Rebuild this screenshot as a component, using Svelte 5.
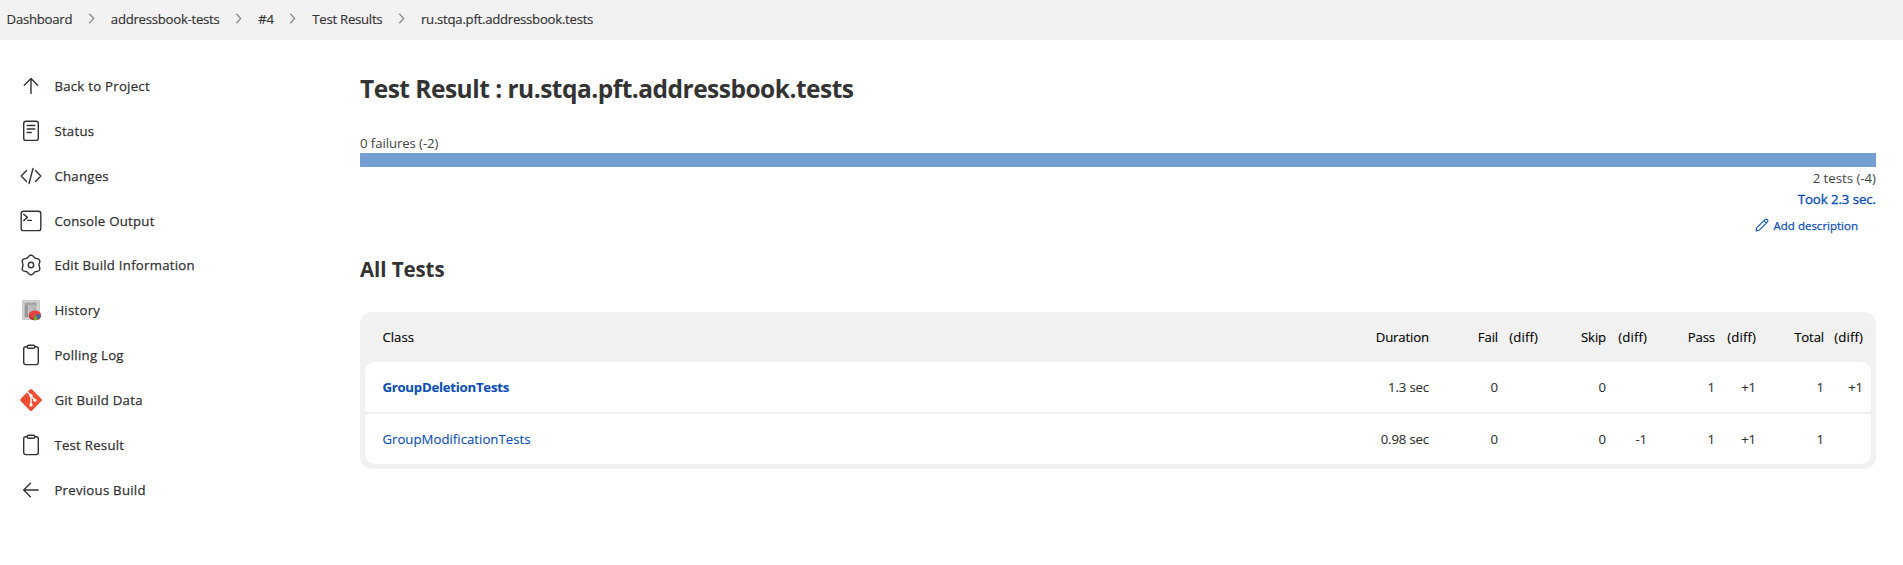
<script>
  const crumbs = ['Dashboard', 'addressbook-tests', '#4', 'Test Results', 'ru.stqa.pft.addressbook.tests'];
  const tasks = [
    ['up', 'Back to Project'],
    ['doc', 'Status'],
    ['code', 'Changes'],
    ['terminal', 'Console Output'],
    ['gear', 'Edit Build Information'],
    ['history', 'History'],
    ['clipboard', 'Polling Log'],
    ['git', 'Git Build Data'],
    ['clipboard', 'Test Result'],
    ['left', 'Previous Build']
  ];
  const head = ['Class', 'Duration', 'Fail', '(diff)', 'Skip', '(diff)', 'Pass', '(diff)', 'Total', '(diff)'];
  const rows = [
    { name: 'GroupDeletionTests', bold: true, cells: ['1.3 sec', '0', '', '0', '', '1', '+1', '1', '+1'] },
    { name: 'GroupModificationTests', bold: false, cells: ['0.98 sec', '0', '', '0', '-1', '1', '+1', '1', ''] }
  ];

  // Six-lobed outline of the settings cog
  const cog = Array.from({ length: 90 }, (_, i) => {
    const a = (i / 90) * Math.PI * 2;
    const r = 8.9 + 0.95 * Math.cos(6 * a);
    return `${(12 + r * Math.sin(a)).toFixed(2)},${(12 - r * Math.cos(a)).toFixed(2)}`;
  }).join(' ');
</script>

<nav class="crumbs">
  {#each crumbs as c, i}
    {#if i > 0}
      <svg class="chev" viewBox="0 0 6 10"><path d="M1 .7 5 5 1 9.3" /></svg>
    {/if}
    <a href="#top" class="crumb">{c}</a>
  {/each}
</nav>

<div class="page">
  <aside>
    {#each tasks as [icon, label]}
      <a href="#top" class="task">
        <svg class="icon" viewBox="0 0 24 24">
          {#if icon === 'up'}
            <path d="M5.3 11.3 12 4.6l6.7 6.7M12 5v14.4" />
          {:else if icon === 'left'}
            <path d="M11.4 5.3 4.7 12l6.7 6.7M5 12h14.2" />
          {:else if icon === 'doc'}
            <rect x="4.7" y="2.2" width="14.6" height="19.2" rx="2.2" />
            <path d="M8.2 6.5h7.6M8.2 10h7.6M8.2 13.5h4" />
          {:else if icon === 'code'}
            <path d="M7.5 6.6 2.2 12l5.3 5.4M16.5 6.6l5.3 5.4-5.3 5.4M14 4.5 10 19.5" />
          {:else if icon === 'terminal'}
            <rect x="2.2" y="2.2" width="19.6" height="19.4" rx="2.2" />
            <path d="M4.7 5.2 8.4 8.4l-3.7 3.2M8.8 11.4h3.6" />
          {:else if icon === 'gear'}
            <circle cx="12" cy="12" r="2.7" />
            <polygon points={cog} />
          {:else if icon === 'clipboard'}
            <path d="M8.2 3.7H6.8a2.1 2.1 0 0 0-2.1 2.1v13.7a2.1 2.1 0 0 0 2.1 2.1h10.4a2.1 2.1 0 0 0 2.1-2.1V5.8a2.1 2.1 0 0 0-2.1-2.1h-1.4" />
            <rect x="8.2" y="2.2" width="7.6" height="3" rx="1.3" />
          {:else if icon === 'git'}
            <g stroke="none">
              <path fill="#f14e32" d="M13.1 1.5a1.6 1.6 0 0 0-2.2 0L1.5 10.9a1.6 1.6 0 0 0 0 2.2l9.4 9.4a1.6 1.6 0 0 0 2.2 0l9.4-9.4a1.6 1.6 0 0 0 0-2.2z" />
              <circle cx="12" cy="7.7" r="1.65" fill="#fff" />
              <circle cx="12" cy="16.9" r="1.65" fill="#fff" />
              <circle cx="15.9" cy="12.2" r="1.65" fill="#fff" />
            </g>
            <path stroke="#fff" d="M8.7 4.3 12 7.7v9.2M12 7.9l3.9 4.2" />
          {:else}
            <g stroke="none">
              <rect x="3" y="2" width="18" height="20" rx="1.2" fill="#c9c9c9" />
              <rect x="4.5" y="3.5" width="15" height="17" fill="#d9d9d8" />
              <path fill="#a4a5a5" d="M5.5 4.5h12.5v2.5H5.5z" />
              <path fill="#969898" d="M5.5 7h3.5v12.5H5.5z" />
              <path fill="#b9baba" d="M9.5 7h8.5v12H9.5z" />
              <ellipse cx="15.9" cy="17.8" rx="6.2" ry="4.5" fill="#b52022" />
              <ellipse cx="15.9" cy="16.6" rx="6.1" ry="4.1" fill="#e04442" />
              <path fill="#3f68b5" d="M16.4 16.7h5.6c0 2-1.2 3.5-3 4.3z" />
              <path fill="#62b32e" d="M16 16.7l2.8 4.6c-1.5.9-3.2 1-4.3.7z" />
            </g>
          {/if}
        </svg>
        <span>{label}</span>
      </a>
    {/each}
  </aside>

  <main>
    <h1>Test Result : ru.stqa.pft.addressbook.tests</h1>
    <div class="failures">0 failures (-2)</div>
    <div class="bar"></div>
    <div class="total">2 tests (-4)</div>
    <a class="took" href="#top">Took 2.3 sec.</a>
    <a class="describe" href="#top">
      <svg viewBox="0 0 15 15"><path d="M1.1 13.9 2 10.3 10.6 1.7a1.7 1.7 0 0 1 2.6 2.6L4.6 12.9zM9.4 2.9l2.7 2.7" /></svg>
      <span>Add description</span>
    </a>
    <h2>All Tests</h2>
    <div class="table">
      <div class="row head">
        {#each head as h}<span class:diff={h === '(diff)'}>{h}</span>{/each}
      </div>
      {#each rows as r}
        <div class="row">
          <a href="#top" class:bold={r.bold}>{r.name}</a>
          {#each r.cells as c}<span>{c}</span>{/each}
        </div>
      {/each}
    </div>
  </main>
</div>

<style>
  :global(body) {
    margin: 0;
    background: #fff;
    color: #333;
    font-family: 'Open Sans', 'Noto Sans', sans-serif;
    font-size: 13.2px;
  }
  a {
    color: inherit;
    text-decoration: none;
  }
  span, a, h1, h2, div {
    white-space: nowrap;
  }
  .crumbs {
    display: flex;
    align-items: center;
    height: 40px;
    padding-left: 6.6px;
    box-sizing: border-box;
    background: #f2f2f2;
  }
  .crumb {
    line-height: 20px;
    padding-bottom: 2px;
    letter-spacing: -0.27px;
    -webkit-text-stroke: 0.15px;
  }
  .chev {
    width: 7px;
    height: 11px;
    margin: 0 16px 3px 15.6px;
    fill: none;
    stroke: #888;
    stroke-width: 1.1;
  }
  .page {
    display: flex;
  }
  aside {
    width: 360px;
    flex: none;
    padding-top: 23.6px;
  }
  .task {
    display: flex;
    align-items: center;
    height: 44.86px;
    padding-left: 19px;
    gap: 11.4px;
    letter-spacing: 0.26px;
    -webkit-text-stroke: 0.25px;
  }
  .icon {
    width: 24px;
    height: 24px;
    flex: none;
    fill: none;
    stroke: #333;
    stroke-width: 1.4;
    stroke-linecap: round;
    stroke-linejoin: round;
  }
  main {
    width: 1516px;
    display: flex;
    flex-direction: column;
  }
  h1 {
    margin: 33px 0 0;
    font-size: 24.5px;
    line-height: 32px;
    font-weight: 700;
    letter-spacing: -0.51px;
  }
  .failures {
    margin-top: 28px;
    line-height: 20px;
    color: #444;
    letter-spacing: -0.08px;
  }
  .bar {
    height: 14px;
    background: #729fcf;
  }
  .total {
    margin-top: 1px;
    line-height: 21px;
    text-align: right;
    color: #444;
    letter-spacing: 0;
  }
  .took {
    line-height: 21px;
    text-align: right;
    color: #0b4fb8;
    -webkit-text-stroke: 0.35px;
    letter-spacing: -0.05px;
  }
  .describe {
    display: flex;
    align-items: center;
    justify-content: flex-end;
    gap: 5px;
    height: 20px;
    margin: 5px 18px 0 0;
    font-size: 11.5px;
    color: #0b4fb8;
    -webkit-text-stroke: 0.25px;
  }
  .describe svg {
    width: 14px;
    height: 14px;
    fill: none;
    stroke: currentColor;
    stroke-width: 1.1;
    stroke-linejoin: round;
  }
  h2 {
    margin: 18px 0 0;
    font-size: 20.5px;
    line-height: 32px;
    font-weight: 700;
    letter-spacing: -0.08px;
  }
  .table {
    margin-top: 27px;
    padding: 0 5px 5px;
    border-radius: 12px;
    background: #f1f1f1;
    display: flex;
    flex-direction: column;
    gap: 2px;
  }
  .row {
    display: grid;
    grid-template-columns: 1fr 60px 69px 40px 68px 41px 68px 41px 68px 39px;
    align-items: center;
    height: 50px;
    padding: 0 8px 0 17.4px;
    background: #fff;
    text-align: right;
    border-radius: 3px;
    letter-spacing: -0.15px;
    -webkit-text-stroke: 0.12px;
  }
  .row > :first-child {
    text-align: left;
    letter-spacing: 0.02px;
  }
  .row .diff {
    letter-spacing: 0.1px;
  }
  .row a {
    color: #0b4fb8;
  }
  .row a.bold {
    font-weight: 700;
    letter-spacing: -0.24px;
  }
  .row.head {
    background: none;
    color: #000;
    margin-bottom: -2px;
  }
  .row:nth-child(2) {
    border-radius: 10px 10px 3px 3px;
  }
  .row:last-child {
    border-radius: 3px 3px 10px 10px;
  }
</style>
